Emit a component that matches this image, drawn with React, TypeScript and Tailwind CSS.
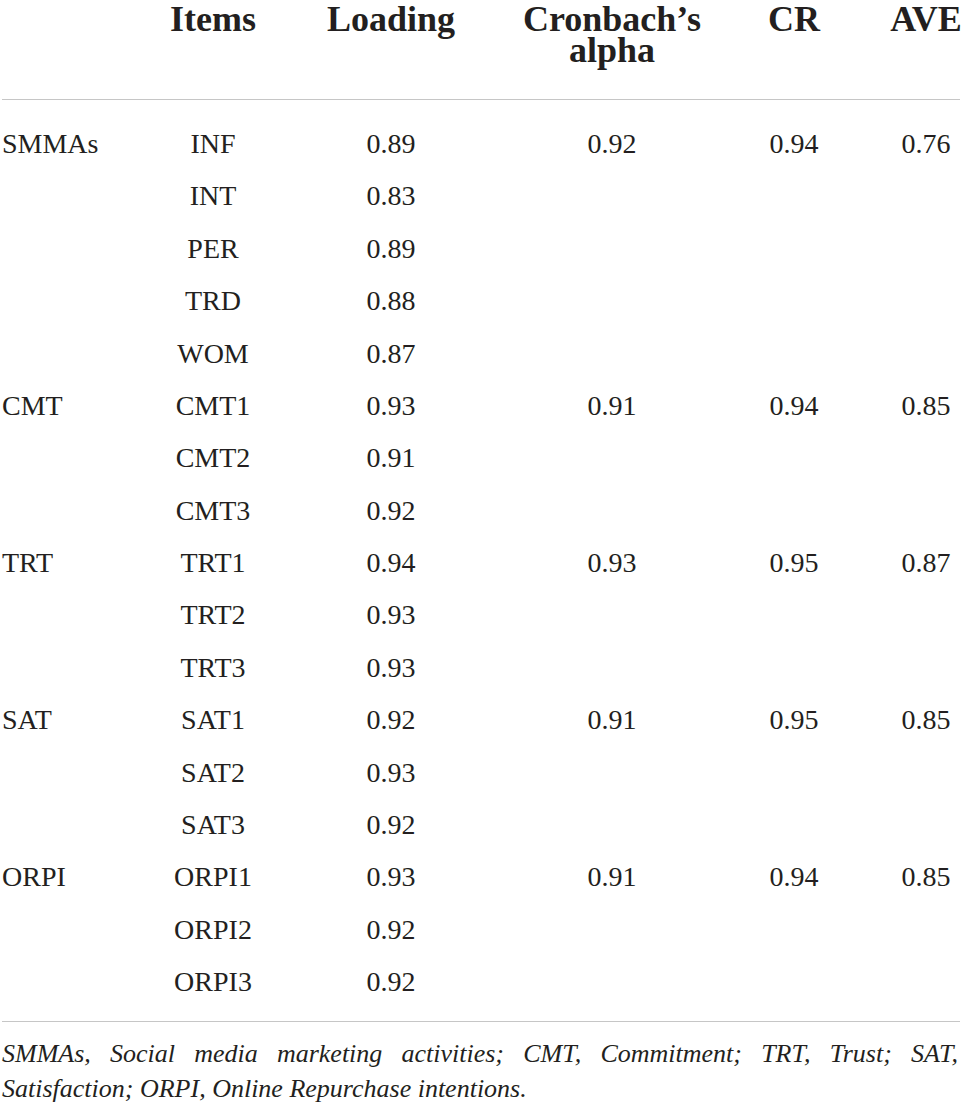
import React from "react";

type Row = { construct: string; item: string; loading: string; alpha: string; cr: string; ave: string };

const rows: Row[] = [
  { construct: "SMMAs", item: "INF", loading: "0.89", alpha: "0.92", cr: "0.94", ave: "0.76" },
  { construct: "", item: "INT", loading: "0.83", alpha: "", cr: "", ave: "" },
  { construct: "", item: "PER", loading: "0.89", alpha: "", cr: "", ave: "" },
  { construct: "", item: "TRD", loading: "0.88", alpha: "", cr: "", ave: "" },
  { construct: "", item: "WOM", loading: "0.87", alpha: "", cr: "", ave: "" },
  { construct: "CMT", item: "CMT1", loading: "0.93", alpha: "0.91", cr: "0.94", ave: "0.85" },
  { construct: "", item: "CMT2", loading: "0.91", alpha: "", cr: "", ave: "" },
  { construct: "", item: "CMT3", loading: "0.92", alpha: "", cr: "", ave: "" },
  { construct: "TRT", item: "TRT1", loading: "0.94", alpha: "0.93", cr: "0.95", ave: "0.87" },
  { construct: "", item: "TRT2", loading: "0.93", alpha: "", cr: "", ave: "" },
  { construct: "", item: "TRT3", loading: "0.93", alpha: "", cr: "", ave: "" },
  { construct: "SAT", item: "SAT1", loading: "0.92", alpha: "0.91", cr: "0.95", ave: "0.85" },
  { construct: "", item: "SAT2", loading: "0.93", alpha: "", cr: "", ave: "" },
  { construct: "", item: "SAT3", loading: "0.92", alpha: "", cr: "", ave: "" },
  { construct: "ORPI", item: "ORPI1", loading: "0.93", alpha: "0.91", cr: "0.94", ave: "0.85" },
  { construct: "", item: "ORPI2", loading: "0.92", alpha: "", cr: "", ave: "" },
  { construct: "", item: "ORPI3", loading: "0.92", alpha: "", cr: "", ave: "" },
];

export default function App() {
  return (
    <div className="w-[964px] h-[1112px] overflow-hidden bg-white text-[#231f20] [font-family:'Liberation_Serif','Times_New_Roman',serif]">
      {/* Header */}
      <div className="grid grid-cols-[124px_178px_178px_264px_100px_164px] pt-[4px] pb-[33px] text-[36px] leading-[31px] font-bold text-center">
        <div></div>
        <div>Items</div>
        <div>Loading</div>
        <div>
          Cronbach’s
          <br />
          alpha
        </div>
        <div>CR</div>
        <div>AVE</div>
      </div>
      <div className="h-px w-[958px] ml-[2px] bg-[#c6c6c6]"></div>

      {/* Body */}
      <div className="pt-[18px] pb-[13px] text-[28px]">
        {rows.map((r, i) => (
          <div
            key={i}
            className="grid grid-cols-[124px_178px_178px_264px_100px_164px] h-[52.375px] leading-[52.375px] text-center"
          >
            <div className="text-left pl-[2px]">{r.construct}</div>
            <div>{r.item}</div>
            <div>{r.loading}</div>
            <div>{r.alpha}</div>
            <div>{r.cr}</div>
            <div>{r.ave}</div>
          </div>
        ))}
      </div>
      <div className="h-px w-[958px] ml-[2px] bg-[#c6c6c6]"></div>

      {/* Footnote */}
      <div className="pt-[14px] pl-[2px] w-[958px] text-[26px] leading-[35px] italic">
        <div className="text-justify [text-align-last:justify]">
          SMMAs, Social media marketing activities; CMT, Commitment; TRT, Trust; SAT,
        </div>
        <div>Satisfaction; ORPI, Online Repurchase intentions.</div>
      </div>
    </div>
  );
}
